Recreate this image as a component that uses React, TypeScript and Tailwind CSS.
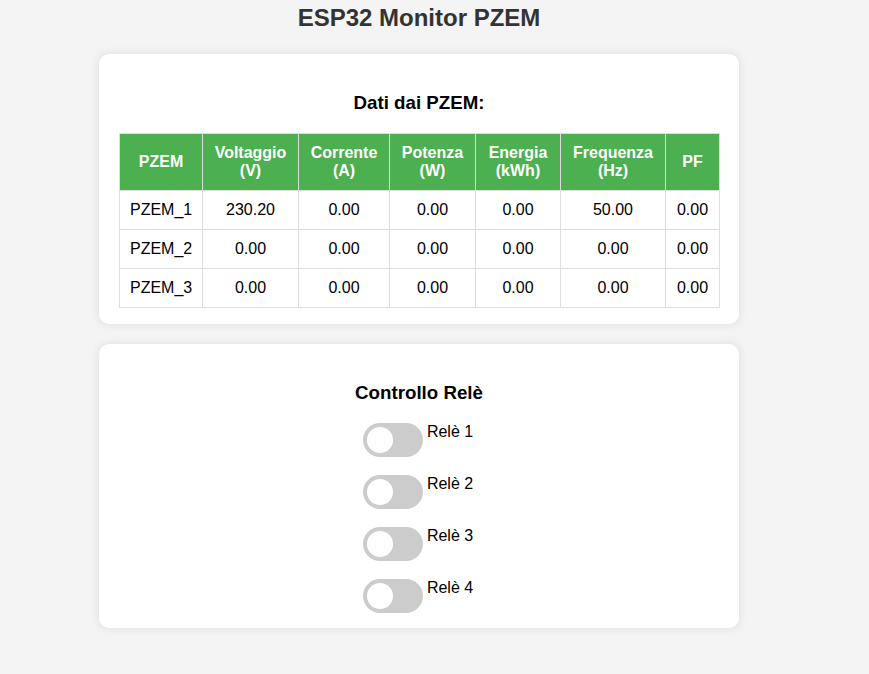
import React from 'react';

const columns = [
  { label: ['PZEM'], width: 'w-[83px]' },
  { label: ['Voltaggio', '(V)'], width: 'w-[96px]' },
  { label: ['Corrente', '(A)'], width: 'w-[91px]' },
  { label: ['Potenza', '(W)'], width: 'w-[86px]' },
  { label: ['Energia', '(kWh)'], width: 'w-[85px]' },
  { label: ['Frequenza', '(Hz)'], width: 'w-[105px]' },
  { label: ['PF'], width: 'w-[54px]' },
];

const rows = [
  ['PZEM_1', '230.20', '0.00', '0.00', '0.00', '50.00', '0.00'],
  ['PZEM_2', '0.00', '0.00', '0.00', '0.00', '0.00', '0.00'],
  ['PZEM_3', '0.00', '0.00', '0.00', '0.00', '0.00', '0.00'],
];

const relays = ['Relè 1', 'Relè 2', 'Relè 3', 'Relè 4'];

function Toggle() {
  return (
    <span className="relative inline-block w-[60px] h-[34px] rounded-[34px] bg-[#cccccc] shrink-0">
      <span className="absolute left-[4px] bottom-[4px] w-[26px] h-[26px] rounded-full bg-white" />
    </span>
  );
}

export default function App() {
  return (
    <div className="min-h-screen bg-[#f4f4f4] font-['Liberation_Sans',Arial,sans-serif] text-black">
      <div className="w-[838px] flex flex-col items-center pt-[4px] pb-[46px]">
        <h1 className="text-[24px] leading-[27.6px] font-bold text-[#333333] mb-[22px]">
          ESP32 Monitor PZEM
        </h1>

        <div className="w-[640px] bg-white rounded-[10px] shadow-[0_0_10px_rgba(0,0,0,0.1)] px-5 pt-5 pb-4">
          <h3 className="text-[18.72px] leading-[21.5px] font-bold text-center my-[18.72px]">
            Dati dai PZEM:
          </h3>
          <table className="w-[600px] border-collapse table-fixed text-[16px] leading-[18px]">
            <thead>
              <tr>
                {columns.map((col) => (
                  <th
                    key={col.label[0]}
                    className={`${col.width} bg-[#4CAF50] text-white font-bold border border-[#dddddd] p-[10px] text-center`}
                  >
                    {col.label.map((line) => (
                      <div key={line}>{line}</div>
                    ))}
                  </th>
                ))}
              </tr>
            </thead>
            <tbody>
              {rows.map((row) => (
                <tr key={row[0]}>
                  {row.map((cell, i) => (
                    <td key={i} className="border border-[#dddddd] p-[10px] text-center">
                      {cell}
                    </td>
                  ))}
                </tr>
              ))}
            </tbody>
          </table>
        </div>

        <div className="w-[640px] mt-5 bg-white rounded-[10px] shadow-[0_0_10px_rgba(0,0,0,0.1)] px-5 pt-5 pb-[15px]">
          <h3 className="text-[18.72px] leading-[21.5px] font-bold text-center mt-[18.72px] mb-[19px]">
            Controllo Relè
          </h3>
          <div className="flex flex-col items-center gap-[18px]">
            {relays.map((name) => (
              <div key={name} className="flex items-start gap-[4px] h-[34px] mr-[2px]">
                <Toggle />
                <span className="text-[16px] leading-[18.4px]">{name}</span>
              </div>
            ))}
          </div>
        </div>
      </div>
    </div>
  );
}
